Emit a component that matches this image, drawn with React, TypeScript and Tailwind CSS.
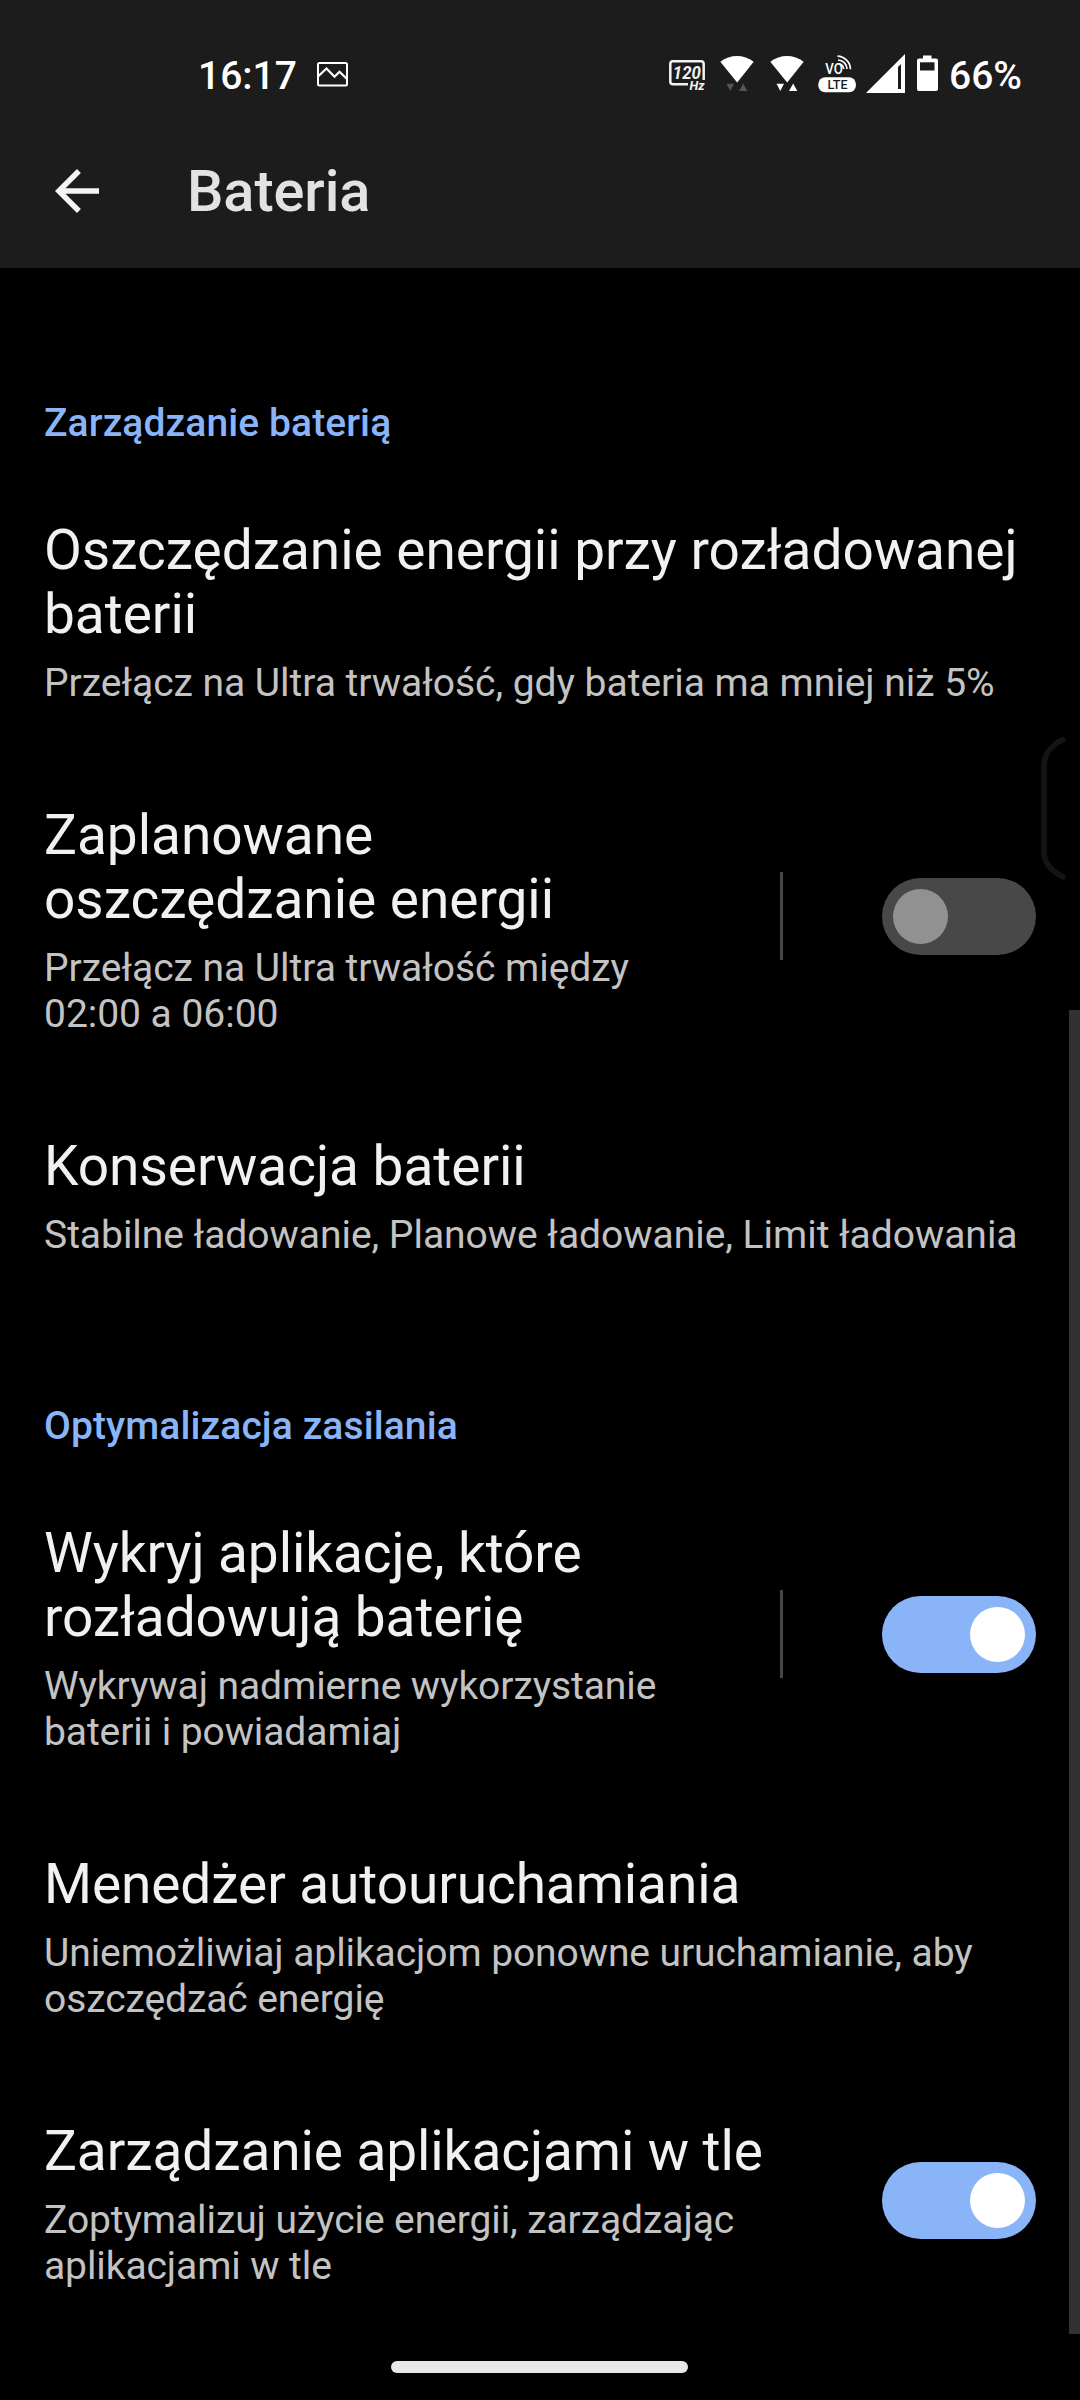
import type { ReactNode } from "react";

function ImageIcon() {
  return (
    <svg width="32" height="44" viewBox="317 50 32 44" fill="none" stroke="white" strokeWidth="2">
      <rect x="318" y="63" width="29" height="22.5" rx="1.5" />
      <path d="M318 76.5 L326.5 68.5 L334.5 76.8 L339.5 71.8 L347 79" strokeWidth="2.2" />
    </svg>
  );
}

function RefreshRateIcon() {
  return (
    <svg width="44" height="44" viewBox="668 50 44 44">
      <path
        d="M688 84.2 H673 Q670.3 84.2 670.3 81.5 V64 Q670.3 61.3 673 61.3 H701 Q703.7 61.3 703.7 64 V80"
        fill="none"
        stroke="#f2f2f2"
        strokeWidth="2.5"
      />
      <text
        x="672.8"
        y="79.3"
        textLength="28"
        lengthAdjust="spacingAndGlyphs"
        className="font-['Roboto',sans-serif] text-[18px] font-bold italic"
        fill="#f2f2f2"
      >
        120
      </text>
      <text
        x="689.5"
        y="90.3"
        textLength="15"
        lengthAdjust="spacingAndGlyphs"
        className="font-['Roboto',sans-serif] text-[12.5px] font-bold italic"
        fill="#f2f2f2"
      >
        Hz
      </text>
    </svg>
  );
}

function WifiIcon({ arrows }: { arrows: string }) {
  return (
    <svg width="50" height="44" viewBox="712 50 50 44">
      <path d="M720.3 61.8 Q728 56 737 56 Q746 56 753.7 61.8 L737.2 82.5 Z" fill="white" />
      <path d="M726.5 83.8 H734 L730.3 91 Z M739 91 H747.3 L743.2 83.6 Z" fill={arrows} />
    </svg>
  );
}

function VolteIcon() {
  return (
    <svg width="50" height="44" viewBox="812 50 50 44">
      <text
        x="825.3"
        y="74.2"
        textLength="17.5"
        lengthAdjust="spacingAndGlyphs"
        className="font-['Roboto',sans-serif] text-[14px] font-medium"
        fill="white"
      >
        VO
      </text>
      <g fill="none" stroke="white" strokeWidth="1.7">
        <path d="M837.5 56.2 A13.5 13.5 0 0 1 850.5 69.2" />
        <path d="M838 60 A9.3 9.3 0 0 1 847 69" />
        <path d="M839 63.8 A5.5 5.5 0 0 1 843.6 69" />
      </g>
      <rect x="818.3" y="77.3" width="37.6" height="15" rx="6.8" fill="white" />
      <text
        x="827.5"
        y="89.3"
        textLength="20"
        lengthAdjust="spacingAndGlyphs"
        className="font-['Roboto',sans-serif] text-[12.5px] font-medium"
        fill="#1c1c1c"
      >
        LTE
      </text>
    </svg>
  );
}

function SignalIcon() {
  return (
    <svg width="50" height="44" viewBox="862 50 50 44">
      <path d="M866 93 L905 54 V93 Z" fill="white" />
      <path d="M898 67 L901 64 V89 H898 Z" fill="#1c1c1c" />
    </svg>
  );
}

function BatteryIcon() {
  return (
    <svg width="36" height="44" viewBox="912 50 36 44">
      <path
        d="M923 55.5 H931.5 V58.5 H936 Q938 58.5 938 60.5 V89 Q938 91 936 91 H919 Q917 91 917 89 V60.5 Q917 58.5 919 58.5 H923 Z"
        fill="white"
      />
      <rect x="920" y="62.3" width="14.5" height="8.2" fill="#1c1c1c" />
    </svg>
  );
}

function StatusBar() {
  return (
    <div className="flex h-[114px] items-start pt-[50px] text-[39px] leading-[46px] font-medium text-white">
      <span className="mt-[3px] ml-[198px] w-[119px]">16:17</span>
      <ImageIcon />
      <div className="ml-auto flex w-[412px] items-start">
        <RefreshRateIcon />
        <WifiIcon arrows="#555555" />
        <WifiIcon arrows="white" />
        <VolteIcon />
        <SignalIcon />
        <BatteryIcon />
        <span className="mt-[3px] ml-px">66%</span>
      </div>
    </div>
  );
}

function AppBar() {
  return (
    <div className="flex h-[154px] items-center pl-11">
      <svg width="66" height="66" viewBox="0 0 24 24" fill="#f4f4f4">
        <path d="M20 11H7.83l5.59-5.59L12 4l-8 8 8 8 1.41-1.41L7.83 13H20v-2z" />
      </svg>
      <h1 className="ml-[77px] text-[57.75px] leading-[68px] font-medium tracking-[-0.1px] text-[#e2e2e2]">Bateria</h1>
    </div>
  );
}

function Switch({ on }: { on: boolean }) {
  return (
    <div
      role="switch"
      aria-checked={on}
      className={
        on
          ? "mb-[7px] flex h-[77px] w-[154px] items-center justify-end rounded-full bg-[#8ab4f8] p-[11px]"
          : "mb-[7px] flex h-[77px] w-[154px] items-center rounded-full bg-[#484848] p-[11px]"
      }
    >
      <div className={on ? "size-[55px] rounded-full bg-white" : "size-[55px] rounded-full bg-[#919191]"} />
    </div>
  );
}

function SectionHeader({ children }: { children: ReactNode }) {
  return (
    <h2 className="mb-6 text-[39px] leading-[46px] font-medium tracking-[0.1px] text-[#8ab4f8]">{children}</h2>
  );
}

type RowProps = { title: string; summary: string; checked?: boolean; divider?: boolean };

function Row({ title, summary, checked, divider }: RowProps) {
  const width = checked === undefined ? "w-full" : divider ? "w-[660px]" : "w-[790px]";
  return (
    <div className="flex items-center pt-12 pb-[49px]">
      <div className={width}>
        <p className="text-[55px] leading-[64px] text-[#f1f1f1]">{title}</p>
        <p className="mt-3.5 text-[39px] leading-[46px] text-[#c3c3c3]">{summary}</p>
      </div>
      {checked !== undefined && (
        <div className="ml-auto flex items-center gap-[99px]">
          {divider && <div className="mb-2 h-[88px] w-[3px] bg-[#474747]" />}
          <Switch on={checked} />
        </div>
      )}
    </div>
  );
}

export default function App() {
  return (
    <div className="relative flex h-[2400px] w-[1080px] flex-col overflow-hidden bg-black font-['Roboto',sans-serif]">
      <header className="h-[268px] shrink-0 bg-[#1c1c1c]">
        <StatusBar />
        <AppBar />
      </header>

      <main className="flex flex-1 flex-col pr-11 pl-11">
        <section className="pt-[132px] tracking-[-0.03px]">
          <SectionHeader>Zarządzanie baterią</SectionHeader>
          <Row
            title="Oszczędzanie energii przy rozładowanej baterii"
            summary="Przełącz na Ultra trwałość, gdy bateria ma mniej niż 5%"
          />
          <Row
            title="Zaplanowane oszczędzanie energii"
            summary="Przełącz na Ultra trwałość między 02:00 a 06:00"
            checked={false}
            divider
          />
          <Row title="Konserwacja baterii" summary="Stabilne ładowanie, Planowe ładowanie, Limit ładowania" />
        </section>
        <section className="pt-24 tracking-[-0.09px]">
          <SectionHeader>Optymalizacja zasilania</SectionHeader>
          <Row
            title="Wykryj aplikacje, które rozładowują baterię"
            summary="Wykrywaj nadmierne wykorzystanie baterii i powiadamiaj"
            checked
            divider
          />
          <Row
            title="Menedżer autouruchamiania"
            summary="Uniemożliwiaj aplikacjom ponowne uruchamianie, aby oszczędzać energię"
          />
          <Row
            title="Zarządzanie aplikacjami w tle"
            summary="Zoptymalizuj użycie energii, zarządzając aplikacjami w tle"
            checked
          />
        </section>
      </main>

      {/* Edge panel handle */}
      <svg
        className="absolute top-[730px] right-0"
        width="40"
        height="156"
        viewBox="1040 730 40 156"
        fill="none"
        stroke="#141414"
        strokeWidth="5.5"
        strokeLinecap="round"
      >
        <path d="M1063 739.5 C1052 745 1044 753 1044 766 V852 C1044 864 1052 871 1063 877" />
      </svg>

      {/* Scrollbar thumb */}
      <div className="absolute top-[1010px] right-0 h-[1324px] w-[11px] bg-[#323232]" />

      {/* Gesture navigation pill */}
      <div className="absolute bottom-[27px] left-[391px] h-3 w-[297px] rounded-full bg-[#e8e8e8]" />
    </div>
  );
}
